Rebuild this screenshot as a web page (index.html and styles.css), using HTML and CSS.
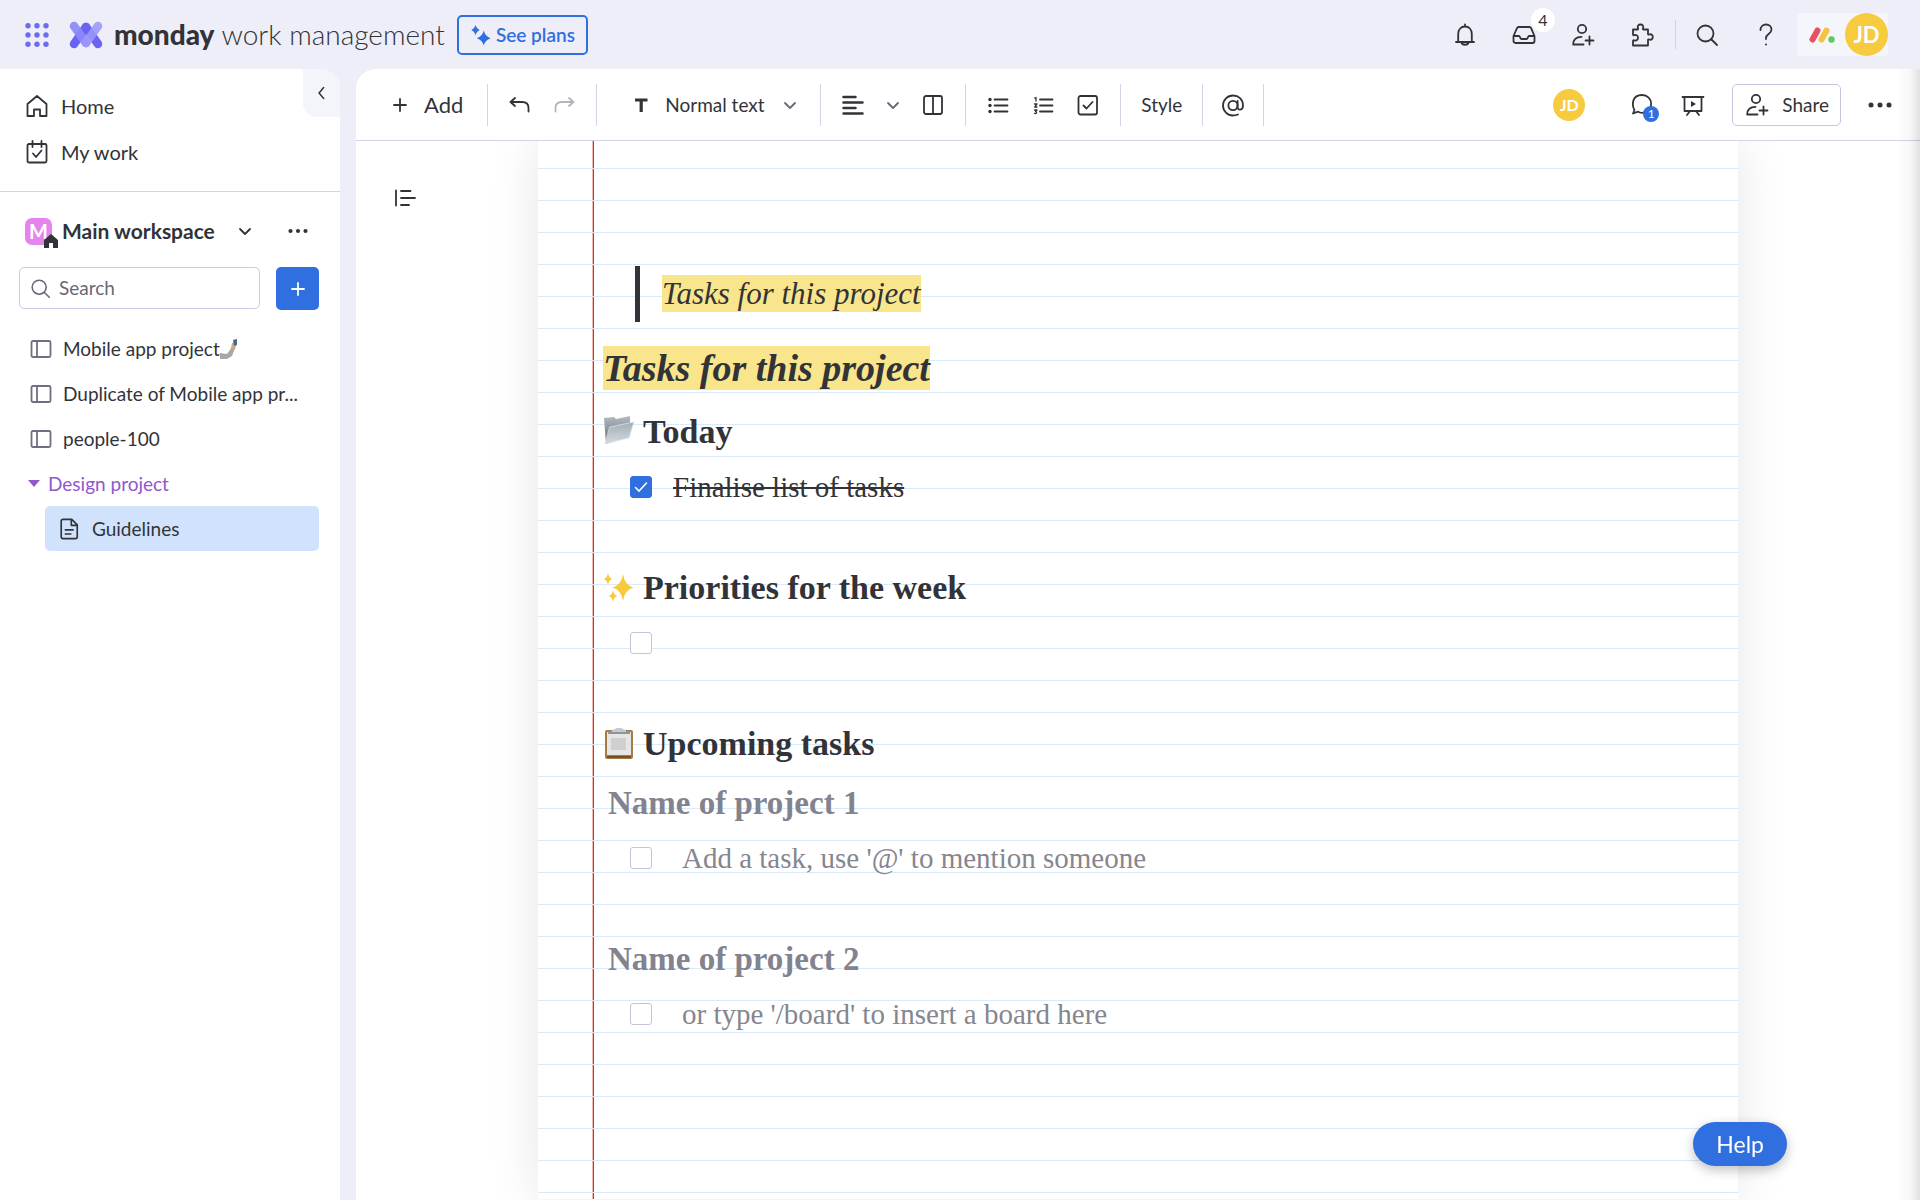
FILE: index.html
```html
<!DOCTYPE html>
<html lang="en">
<head>
<meta charset="utf-8">
<meta name="viewport" content="width=device-width, initial-scale=1">
<title>Guidelines</title>
<link rel="stylesheet" href="styles.css">
</head>
<body>
<svg class="defs" aria-hidden="true">
  <symbol id="i-person-add" viewBox="0 0 24 24"><circle cx="11" cy="6" r="4.2"/><path d="M10.5 13.8C5 13.800 2.200 17 2.200 21.500H12.500M18.500 13.500v8M14.500 17.500h8"/></symbol>
  <symbol id="i-search" viewBox="0 0 24 24"><circle cx="10.500" cy="10.500" r="8"/><path d="M16.500 16.500L22 22"/></symbol>
  <symbol id="i-plus" viewBox="0 0 24 24"><path d="M12 6v12M6 12h12"/></symbol>
  <symbol id="i-chevron" viewBox="0 0 24 24"><path d="M7 10l5 5 5-5"/></symbol>
  <symbol id="i-dots" viewBox="0 0 24 24"><g fill="currentColor" stroke="none"><circle cx="3" cy="12" r="2.500"/><circle cx="12" cy="12" r="2.500"/><circle cx="21" cy="12" r="2.500"/></g></symbol>
  <symbol id="i-board" viewBox="0 0 24 24"><rect x="2.500" y="4" width="19" height="16" rx="1.500"/><path d="M8 4v16"/></symbol>
</svg>

<header class="topbar">
  <button class="icon-btn apps" aria-label="Switch product">
    <svg viewBox="0 0 24 24"><g fill="#6c6cf0"><circle cx="3" cy="2.800" r="2.700"/><circle cx="12" cy="2.800" r="2.700"/><circle cx="21" cy="2.800" r="2.700"/><circle cx="3" cy="12" r="2.700"/><circle cx="12" cy="12" r="2.700"/><circle cx="21" cy="12" r="2.700"/><circle cx="3" cy="21.200" r="2.700"/><circle cx="12" cy="21.200" r="2.700"/><circle cx="21" cy="21.200" r="2.700"/></g></svg>
  </button>
  <a class="brand" href="#">
    <svg class="brand-mark" viewBox="0 0 34 28"><g stroke-width="8.500" stroke-linecap="round" fill="none"><path d="M5 23L17 6" stroke="#6a62f3"/><path d="M17 6l12 17" stroke="#6a62f3"/><path d="M5 5l12 17" stroke="#8d88f8" opacity=".92"/><path d="M29 5L17 22" stroke="#9b97f9" opacity=".88"/></g></svg>
    <span class="brand-name"><b>monday</b> work management</span>
  </a>
  <button class="plans">
    <svg viewBox="0 0 24 24" fill="currentColor"><path d="M6 1q1 4 4.500 5.500Q7 8 6 12 5 8 1.500 6.500 5 5 6 1z"/><path d="M15 7q1.500 6.500 7.500 8.500-6 2-7.500 8-1.500-6-7.500-8Q13.500 13.500 15 7z"/></svg>
    See plans
  </button>
  <nav class="top-actions" aria-label="Account">
    <button class="icon-btn" aria-label="Notifications"><svg viewBox="0 0 24 24"><path d="M12 1.500v2M3 19h18M5.200 19V11c0-4.500 2.800-7.500 6.800-7.500s6.800 3 6.800 7.500v8M8.500 19.500c.5 3 6.500 3 7 0"/></svg></button>
    <button class="icon-btn" aria-label="Inbox"><svg viewBox="0 0 24 24"><path d="M6.500 4h11c.8 0 1.300.4 1.600 1.200L22.500 13v5c0 1.200-.8 2-2 2h-17c-1.200 0-2-.8-2-2v-5L5 5.200C5.300 4.400 5.700 4 6.500 4zM1.500 13H7c1 0 1.200 3 2.500 3h5c1.300 0 1.500-3 2.500-3h5.500"/></svg><span class="count">4</span></button>
    <button class="icon-btn" aria-label="Invite members"><svg><use href="#i-person-add"/></svg></button>
    <button class="icon-btn" aria-label="Apps"><svg viewBox="0 0 24 24"><path d="M3 6.500h4.500c.8 0 .8-.6.500-1.300C7 3 8.500 1.500 10.500 1.500S14 3 13 5.200c-.3.700-.3 1.300.5 1.300H18V11c0 .8.600.8 1.300.5 2-.8 3.500.7 3.500 2.500s-1.500 3.300-3.500 2.500c-.7-.3-1.300-.3-1.300.5v5.500H3V18c0-.8.600-1 1.300-.7 2 .8 3.700-.6 3.700-2.600s-1.700-3.400-3.700-2.600C3.600 12.400 3 12.300 3 11.500z"/></svg></button>
    <span class="rule"></span>
    <button class="icon-btn find" aria-label="Search everything"><svg><use href="#i-search"/></svg></button>
    <button class="icon-btn" aria-label="Help center"><svg viewBox="0 0 24 24"><path d="M6.500 7c0-3.200 2.300-5.500 5.500-5.500s5.500 2.200 5.500 5c0 4.500-5.500 4.500-5.500 8.500v1"/><circle cx="12" cy="21.500" r="1" fill="currentColor"/></svg></button>
    <button class="profile" aria-label="Profile">
      <svg viewBox="0 0 26 16"><g stroke-width="6" stroke-linecap="round"><path d="M3.500 12.500l5-9" stroke="#e8505f"/><path d="M12.500 12.500l5-9" stroke="#f3c341"/></g><circle cx="22.500" cy="12.500" r="3.200" fill="#5fca58"/></svg>
      <span class="avatar avatar-lg">JD</span>
    </button>
  </nav>
</header>

<div class="shell">
  <aside class="sidebar">
    <button class="collapse" aria-label="Collapse sidebar"><svg viewBox="0 0 24 24"><path d="M14 5.500L8.500 12l5.500 6.500"/></svg></button>
    <nav class="primary" aria-label="Main">
      <a href="#"><svg viewBox="0 0 24 24"><path d="M2.500 10L12 2l9.500 8v12H15v-6.500H9V22H2.500z"/></svg>Home</a>
      <a href="#"><svg viewBox="0 0 24 24"><rect x="2.500" y="4" width="19" height="18.500" rx="1.500"/><path d="M7.500 1v6M16.500 1v6M8 13.500l3 3.500 5.500-6.500"/></svg>My work</a>
    </nav>
    <div class="workspace">
      <span class="ws-logo">M<svg class="ws-home" viewBox="0 0 14 14"><path d="M0 6l7-6 7 6v8H9V9H5v5H0z" fill="#323338"/></svg></span>
      <h2>Main workspace</h2>
      <button class="icon-btn" aria-label="Switch workspace"><svg><use href="#i-chevron"/></svg></button>
      <button class="icon-btn ws-more" aria-label="Workspace options"><svg><use href="#i-dots"/></svg></button>
    </div>
    <div class="finder">
      <label class="search"><svg><use href="#i-search"/></svg><input type="search" placeholder="Search" aria-label="Search"></label>
      <button class="add-item" aria-label="Add item"><svg><use href="#i-plus"/></svg></button>
    </div>
    <nav class="items" aria-label="Workspace items">
      <a href="#"><svg><use href="#i-board"/></svg><span>Mobile app project</span><svg class="selfie" viewBox="0 0 18 20"><path d="M0 14l7 1 5-7 3 1-3 8-5 3H0z" fill="#a7a7a7"/><path d="M11 9l1-5 3-1 1 3-1 5z" fill="#d9a878"/><path d="M13 1l4-1v6l-3 1z" fill="#496a8c"/></svg></a>
      <a href="#"><svg><use href="#i-board"/></svg><span>Duplicate of Mobile app pr...</span></a>
      <a href="#"><svg><use href="#i-board"/></svg><span>people-100</span></a>
      <button class="folder"><svg viewBox="0 0 12 7"><path d="M0 0h12L6 7z" fill="currentColor" stroke="none"/></svg>Design project</button>
      <a class="current" href="#" aria-current="page"><svg viewBox="0 0 24 24"><path d="M5.500 1.500H15l6 6V20.500q0 2-2 2H5.500q-2 0-2-2v-17q0-2 2-2zM14.500 2v6H21M8 13h8.500M8 17.500h6"/></svg><span>Guidelines</span></a>
    </nav>
  </aside>

  <main class="doc">
    <div class="toolbar" role="toolbar" aria-label="Formatting">
      <div class="group g-add"><button class="text-btn"><svg><use href="#i-plus"/></svg>Add</button></div>
      <div class="group">
        <button class="icon-btn" aria-label="Undo"><svg viewBox="0 0 24 24"><path d="M7 5L2.500 9 7 13M2.500 9H14q6.500 0 6.500 6v3.500"/></svg></button>
        <button class="icon-btn" aria-label="Redo" disabled><svg viewBox="0 0 24 24"><path d="M17 5l4.500 4-4.500 4M21.500 9H10q-6.500 0-6.500 6v3.500"/></svg></button>
      </div>
      <div class="group g-style">
        <svg viewBox="0 0 24 24"><g stroke-width="3.200" stroke-linecap="butt"><path d="M6 7h12.500"/><path d="M12.200 6v13"/></g></svg>
        <select aria-label="Text style"><option>Normal text</option><option>Large title</option><option>Medium title</option></select>
        <svg class="chev"><use href="#i-chevron"/></svg>
      </div>
      <div class="group g-align">
        <button class="icon-btn" aria-label="Align"><svg viewBox="0 0 24 24"><path d="M2.500 4h12M2.500 9.500h19M2.500 15h12M2.500 20.500h19" stroke-width="2.500"/></svg></button>
        <button class="icon-btn chev" aria-label="Align options"><svg><use href="#i-chevron"/></svg></button>
        <button class="icon-btn" aria-label="Columns"><svg viewBox="0 0 24 24"><rect x="3" y="3" width="18" height="18" rx="2"/><path d="M12 3v18"/></svg></button>
      </div>
      <div class="group g-lists">
        <button class="icon-btn" aria-label="Bulleted list"><svg viewBox="0 0 24 24"><path d="M8.500 6.500h13M8.500 12.500h13M8.500 18.500h13"/><g fill="currentColor" stroke="none"><circle cx="4" cy="6.500" r="1.700"/><circle cx="4" cy="12.500" r="1.700"/><circle cx="4" cy="18.500" r="1.700"/></g></svg></button>
        <button class="icon-btn" aria-label="Numbered list"><svg viewBox="0 0 24 24"><path d="M9 6.500h12.500M9 12.500h12.500M9 18.500h12.500"/><path d="M3.500 5L5 4.500V8M3.500 11H6l-2.300 3H6M3.500 17H6l-1.500 1.500Q6 19 5.500 20q-1 1-2 .3" stroke-width="1.300"/></svg></button>
        <button class="icon-btn" aria-label="Checklist"><svg viewBox="0 0 24 24"><rect x="2.500" y="3" width="18.500" height="18.500" rx="2"/><path d="M7.500 12.500l3 3 6-6.500"/></svg></button>
      </div>
      <div class="group"><button class="text-btn small">Style</button></div>
      <div class="group g-mention"><button class="icon-btn" aria-label="Mention"><svg viewBox="0 0 24 24"><circle cx="12" cy="12.500" r="4.600"/><path d="M16.600 8v6c0 4 5.400 3.500 5.400-1.500C22 6 17.500 2.500 12 2.500S2 7 2 12.500 6.500 22.500 12 22.500q2.500 0 5-1"/></svg></button></div>

      <div class="doc-actions">
        <span class="avatar avatar-sm">JD</span>
        <button class="icon-btn chat" aria-label="Comments"><svg viewBox="0 0 24 24"><path d="M3 20.500l1.500-3.500C1.500 12 2 2 12 2c5.500 0 9.200 3.800 9.200 8.800S17.500 19.800 12 19.800c-1.500 0-3-.4-4-1.200z"/></svg><span class="chat-count">1</span></button>
        <button class="icon-btn" aria-label="Present"><svg viewBox="0 0 24 24"><path d="M1.500 4h21M3.500 4v14h17V4M9 18l-3 4M15 18l3 4"/><path d="M10 8l5 3-5 3z" fill="currentColor"/></svg></button>
        <button class="share"><svg><use href="#i-person-add"/></svg>Share</button>
        <button class="icon-btn" aria-label="More"><svg><use href="#i-dots"/></svg></button>
      </div>
    </div>

    <div class="canvas">
      <button class="icon-btn outline" aria-label="Table of contents"><svg viewBox="0 0 24 24"><path d="M3 4.500v15M8 5h9.500M8 12h14M8 19h8"/></svg></button>
      <article class="page">
        <blockquote><mark>Tasks for this project</mark></blockquote>
        <h1><mark>Tasks for this project</mark></h1>

        <h2><svg viewBox="0 0 32 32"><defs><linearGradient id="fd" x1="0" y1="0" x2="0" y2="1"><stop offset="0" stop-color="#b4bcc3"/><stop offset="1" stop-color="#5b6872"/></linearGradient><linearGradient id="ff" x1="0" y1="0" x2="0" y2="1"><stop offset="0" stop-color="#a2adb6"/><stop offset="1" stop-color="#d5dade"/></linearGradient></defs><path d="M1 2l10-1 2 2 14-3v20L3 28z" fill="url(#fd)"/><path d="M7 11l24-5-5 16-24 6z" fill="url(#ff)" stroke="#e6eaed" stroke-width=".7"/></svg>Today</h2>
        <div class="task done"><input type="checkbox" id="t1" checked><label for="t1">Finalise list of tasks</label></div>

        <h2 class="next"><svg viewBox="0 0 32 32"><g fill="#f9c93c"><path d="M20 2q1.500 11 10.500 13.500Q21.500 18 20 29q-1.500-11-10.500-13.500Q18.500 13 20 2z"/><path d="M5 1q.7 5 4.500 6Q5.700 8 5 13 4.300 8 .5 7 4.300 6 5 1z"/><path d="M10 18q.7 5 4.500 6-3.800 1-4.500 6-.7-5-4.500-6 3.800-1 4.500-6z"/></g></svg>Priorities for the week</h2>
        <div class="task"><input type="checkbox" aria-label="Empty task"></div>

        <h2 class="next"><svg viewBox="0 0 32 32"><rect x="2" y="2" width="28" height="29" rx="2" fill="#a67c45"/><path d="M4 4h24v23H4z" fill="#e6e6e4"/><path d="M8 10h15v12H8z" fill="#cfd0cf"/><path d="M5 3h22v3H5z" fill="#8d9596"/><path d="M9 2l3-1q4-3 8 0l3 1v2H9z" fill="#c4cbd0"/><path d="M4 28h24v2H4z" fill="#76501f"/></svg>Upcoming tasks</h2>
        <h3>Name of project 1</h3>
        <div class="task hint"><input type="checkbox" id="t3"><label for="t3">Add a task, use '@' to mention someone</label></div>

        <h3 class="next">Name of project 2</h3>
        <div class="task hint"><input type="checkbox" id="t4"><label for="t4">or type '/board' to insert a board here</label></div>
      </article>
    </div>
  </main>
</div>
<button class="help">Help</button>
</body>
</html>
```
FILE: styles.css
```css
:root {
  --ink: #323338;
  --muted: #676879;
  --blue: #2f6fe0;
  --line: #d0d4e4;
  --chrome: #eeeef8;
}
* { box-sizing: border-box; }
body {
  margin: 0;
  height: 100vh;
  display: flex;
  flex-direction: column;
  overflow: hidden;
  background: var(--chrome);
  color: var(--ink);
  font: 19px/24px Lato, "Open Sans", sans-serif;
}
.defs { position: absolute; width: 0; height: 0; }
button, select, input { font: inherit; color: inherit; }
button {
  display: flex;
  align-items: center;
  border: 0;
  padding: 0;
  background: none;
  white-space: nowrap;
}
a { color: inherit; text-decoration: none; }
h1, h2, h3, blockquote { margin: 0; }
svg {
  width: 24px;
  height: 24px;
  flex: none;
  display: block;
  fill: none;
  stroke: currentColor;
  stroke-width: 1.8;
  stroke-linecap: round;
  stroke-linejoin: round;
}
svg [fill]:not([stroke]) { stroke: none; }
.icon-btn { position: relative; flex: none; }

/* Top bar */
.topbar {
  flex: none;
  height: 69px;
  display: flex;
  align-items: center;
  padding: 0 32px 0 25px;
}
.brand { display: flex; align-items: center; gap: 11px; margin-left: 20px; }
.brand-mark { width: 34px; height: 28px; }
.brand-name { padding-bottom: 2px; font-size: 28px; line-height: 36px; font-weight: 300; white-space: nowrap; }
.brand-name b { font-weight: 900; }
.plans {
  height: 40px;
  margin-left: 12px;
  padding: 0 11px;
  gap: 4px;
  border: 2px solid var(--blue);
  border-radius: 5px;
  color: var(--blue);
  font-weight: 600;
}
.plans svg { width: 22px; height: 22px; fill: currentColor; stroke: none; }
.top-actions { margin-left: auto; display: flex; align-items: center; gap: 35px; }
.rule { width: 1px; height: 29px; margin-left: -14px; margin-right: -16px; background: #ccd3e6; }
.count {
  position: absolute;
  left: 19px;
  top: -15px;
  width: 24px;
  height: 24px;
  border-radius: 50%;
  background: #fff;
  font-size: 16px;
  text-align: center;
}
.profile { gap: 10px; margin-left: -16px; padding-left: 12px; border-radius: 4px; background: #f5f6fc; }
.profile svg { width: 26px; height: 16px; }
.avatar {
  display: flex;
  align-items: center;
  justify-content: center;
  border-radius: 50%;
  background: #f6cb3f;
  color: #fff;
  font-weight: 700;
}
.avatar-lg { width: 43px; height: 43px; font-size: 22px; }
.avatar-sm { width: 32px; height: 32px; font-size: 16px; }

/* Layout */
.shell { flex: 1; min-height: 0; display: flex; gap: 16px; }

/* Sidebar */
.sidebar {
  position: relative;
  width: 340px;
  flex: none;
  background: #fff;
  border-top-right-radius: 20px;
  overflow: hidden;
}
.collapse {
  position: absolute;
  top: 0;
  right: 0;
  width: 37px;
  height: 48px;
  justify-content: center;
  border-bottom-left-radius: 14px;
  background: #f4f5fb;
}
.collapse svg { width: 20px; height: 20px; }
.primary { padding: 14px 25px 16px; border-bottom: 1px solid var(--line); }
.primary a { display: flex; align-items: center; gap: 12px; height: 46px; font-size: 20px; }
.workspace { display: flex; align-items: center; height: 75px; padding: 3px 32px 0 25px; }
.workspace h2 { margin: 0 18px 0 10px; font-size: 21px; line-height: 28px; font-weight: 700; white-space: nowrap; }
.ws-logo {
  position: relative;
  width: 27px;
  height: 27px;
  border-radius: 7px;
  background: #e484ec;
  color: #fff;
  font-size: 20px;
  line-height: 27px;
  font-weight: 700;
  text-align: center;
}
.ws-home { position: absolute; left: 19px; top: 16px; width: 14px; height: 14px; stroke: none; }
.ws-more { margin-left: auto; }
.ws-more svg { width: 20px; height: 20px; }
.finder { display: flex; gap: 16px; padding: 0 21px 0 19px; }
.search {
  flex: 1;
  min-width: 0;
  display: flex;
  align-items: center;
  gap: 8px;
  height: 42px;
  padding-left: 10px;
  border: 1px solid #c9cbe0;
  border-radius: 5px;
  color: var(--muted);
}
.search svg { width: 21px; height: 21px; }
.search input { width: 100%; min-width: 0; border: 0; padding: 0; background: none; outline: 0; }
.search input::placeholder { color: var(--muted); opacity: 1; }
.add-item { width: 43px; height: 43px; justify-content: center; border-radius: 5px; background: var(--blue); color: #fff; }
.items { padding: 16px 21px 0 28px; }
.items a, .folder { display: flex; align-items: center; height: 45px; white-space: nowrap; }
.items a svg { margin: 0 10px 0 1px; color: #6e6f82; }
.items a .selfie { width: 18px; height: 20px; margin: 0; stroke: none; }
.folder { gap: 8px; color: #9057cf; }
.folder svg { width: 12px; height: 7px; }
.items .current { margin-left: 17px; padding-left: 12px; border-radius: 5px; background: #d1e3fc; }
.items .current svg { width: 22px; height: 22px; margin-right: 12px; color: var(--ink); }

/* Document area */
.doc {
  position: relative;
  flex: 1;
  min-width: 0;
  display: flex;
  flex-direction: column;
  overflow: hidden;
  background: #fff;
  border-top-left-radius: 20px;
}
.doc::after {
  content: "";
  position: absolute;
  top: 0;
  right: 0;
  width: 24px;
  height: 100%;
  background: linear-gradient(to right, transparent, rgba(0, 0, 0, .03) 60%, rgba(0, 0, 0, .12));
  pointer-events: none;
}
.toolbar {
  flex: none;
  height: 72px;
  display: flex;
  align-items: center;
  border-bottom: 1px solid var(--line);
}
.group {
  height: 42px;
  display: flex;
  align-items: center;
  gap: 20px;
  padding: 0 20px;
  border-right: 1px solid var(--line);
}
.g-add { padding: 0 24px 0 32px; }
.g-style { gap: 12px; padding: 0 18px 0 32px; }
.g-align { gap: 16px; }
.g-lists { gap: 21px; }
.g-mention { padding: 0 18px; }
.text-btn { gap: 12px; font-size: 22px; }
.text-btn.small { font-size: 19px; }
.toolbar select { width: 101px; border: 0; padding: 0; background: none; appearance: none; outline: 0; }
.toolbar button:disabled { color: #b3b4bb; }
.chev { color: var(--muted); }
.doc-actions { margin-left: auto; display: flex; align-items: center; gap: 27px; padding-right: 28px; }
.chat { margin-left: 18px; }
.chat-count {
  position: absolute;
  left: 13px;
  top: 13px;
  width: 16px;
  height: 16px;
  border-radius: 50%;
  background: var(--blue);
  color: #fff;
  font-size: 12px;
  line-height: 16px;
  text-align: center;
}
.share { height: 42px; padding: 0 11px 0 12px; gap: 13px; border: 1px solid #c3c6dc; border-radius: 5px; }

.canvas { position: relative; flex: 1; min-height: 0; overflow: hidden; padding-bottom: 1px; }
.outline { position: absolute; left: 37px; top: 45px; }

/* Lined paper */
.page {
  max-width: 1200px;
  height: 100%;
  margin: 0 auto;
  padding: 125px 65px 0;
  background:
    linear-gradient(#d9ebf8 1px, transparent 1px) 0 27px / 100% 32px,
    linear-gradient(to right, #f5b5aa 1px, #d0352d 1px) 54px 0 / 2px 100% no-repeat,
    #fff;
  box-shadow: 0 0 48px rgba(0, 0, 0, .1);
  font-family: "Liberation Serif", serif;
}
.page mark { background: #f9e58b; color: inherit; padding: 1px 0; }
.page blockquote {
  margin-left: 32px;
  padding-left: 22px;
  border-left: 5px solid var(--ink);
  font-size: 31px;
  line-height: 56px;
  font-style: italic;
}
.page h1 { margin-top: 22px; font-size: 38px; line-height: 48px; font-weight: 700; font-style: italic; }
.page h2 {
  display: flex;
  align-items: center;
  gap: 8px;
  margin-top: 18px;
  font-size: 34px;
  line-height: 44px;
  font-weight: 700;
}
.page h2 svg { width: 32px; height: 32px; stroke: none; }
.page h3 { margin: 15px 0 0 5px; font-size: 33px; line-height: 44px; font-weight: 700; color: #82838f; }
.page .next { margin-top: 59px; }
.task {
  display: flex;
  align-items: center;
  gap: 21px;
  height: 40px;
  margin-top: 13px;
  padding-left: 27px;
  font-size: 29px;
  line-height: 40px;
}
.task input {
  appearance: none;
  width: 22px;
  height: 22px;
  margin: 0;
  border: 1px solid #c3c6d8;
  border-radius: 3px;
  background: #fff;
}
.task input:checked {
  border-color: var(--blue);
  background: var(--blue) url("data:image/svg+xml,%3Csvg xmlns='http://www.w3.org/2000/svg' viewBox='0 0 20 20' fill='none' stroke='white' stroke-width='1.6' stroke-linecap='round'%3E%3Cpath d='M4.500 10.500l3.500 3.500 7.500-8'/%3E%3C/svg%3E") center / 20px no-repeat;
}
.done label { text-decoration: line-through; text-decoration-thickness: 2px; }
.hint { gap: 30px; color: #85868f; }

.help {
  position: fixed;
  right: 133px;
  bottom: 34px;
  height: 44px;
  padding: 0 23px;
  border-radius: 22px;
  background: var(--blue);
  color: #fff;
  font-size: 23px;
  box-shadow: 0 4px 12px rgba(0, 0, 0, .25);
}
```
